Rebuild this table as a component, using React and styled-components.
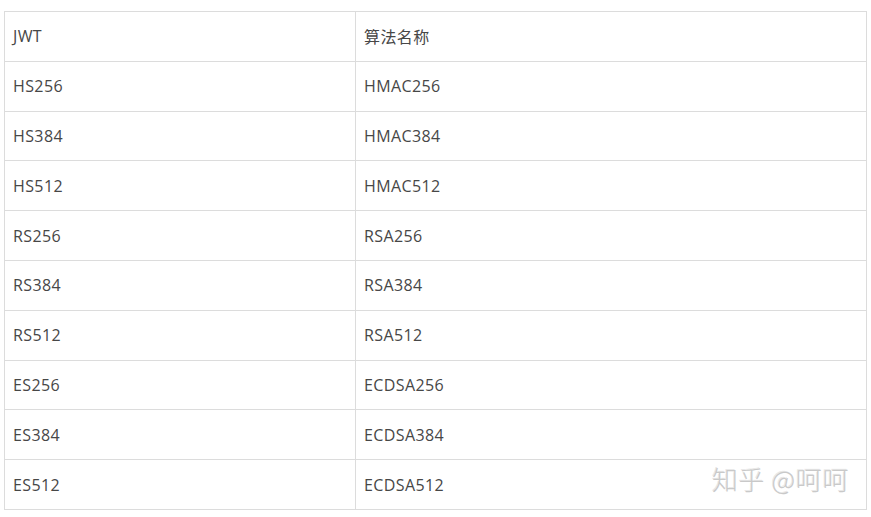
import { createGlobalStyle } from "styled-components";
import { styled } from "styled-components";

const GlobalStyle = createGlobalStyle`
  html, body {
    margin: 0;
    padding: 0;
    background: #ffffff;
  }
`;

const Page = styled.div`
  position: relative;
  width: 871px;
  height: 517px;
  padding: 11px 4px 0 4px;
  box-sizing: border-box;
  font-family: "Open Sans", "Noto Sans CJK SC", sans-serif;
`;

const Table = styled.table`
  width: 863px;
  border-collapse: collapse;
  table-layout: fixed;
`;

const Cell = styled.td`
  border: 1px solid #dcdcdc;
  height: 48.8px;
  padding: 0 0 0 8px;
  font-size: 16px;
  letter-spacing: 0.4px;
  color: #474747;
  vertical-align: middle;
  width: ${(p) => (p.$first ? "342px" : "auto")};
`;

const Watermark = styled.div`
  position: absolute;
  right: 22px;
  bottom: 20px;
  font-family: "Noto Sans CJK SC", sans-serif;
  font-size: 26px;
  font-weight: 300;
  letter-spacing: 0.6px;
  color: #c9c9c9;
  text-shadow: 1px 1px 0 rgba(255, 255, 255, 0.9), -1px -1px 0 rgba(140, 140, 140, 0.2);
`;

const rows = [
  ["JWT", "算法名称"],
  ["HS256", "HMAC256"],
  ["HS384", "HMAC384"],
  ["HS512", "HMAC512"],
  ["RS256", "RSA256"],
  ["RS384", "RSA384"],
  ["RS512", "RSA512"],
  ["ES256", "ECDSA256"],
  ["ES384", "ECDSA384"],
  ["ES512", "ECDSA512"],
];

export default function App() {
  return (
    <>
      <GlobalStyle />
      <Page>
        <Table>
          <tbody>
            {rows.map(([a, b]) => (
              <tr key={a}>
                <Cell $first>{a}</Cell>
                <Cell>{b}</Cell>
              </tr>
            ))}
          </tbody>
        </Table>
        <Watermark>知乎 @呵呵</Watermark>
      </Page>
    </>
  );
}
